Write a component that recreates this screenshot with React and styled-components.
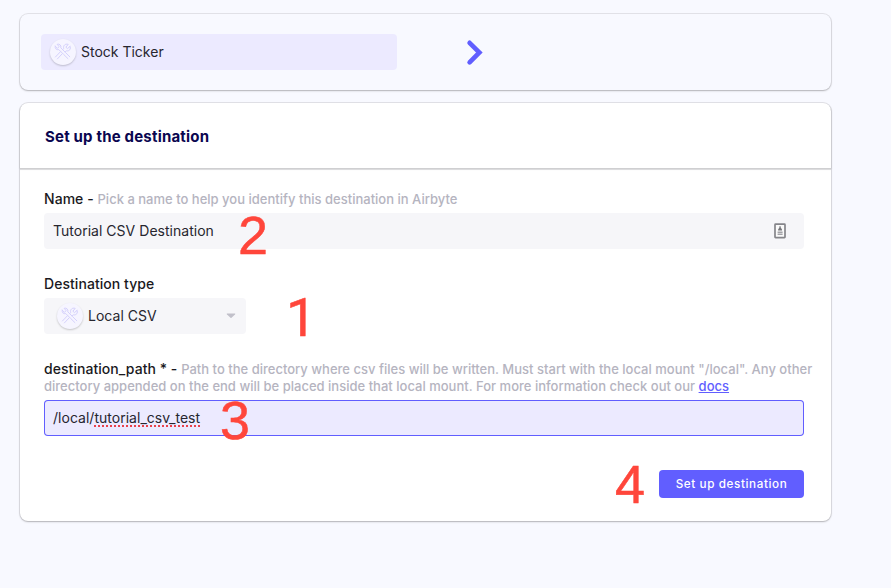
import React from "react";
import styled, { createGlobalStyle } from "styled-components";

const GlobalStyle = createGlobalStyle`
  * { box-sizing: border-box; }
  body {
    margin: 0;
    background: #f8f9ff;
    font-family: Inter, "Liberation Sans", sans-serif;
    color: #1a194d;
    overflow: hidden;
  }
`;

const Page = styled.main`
  width: 891px;
  height: 588px;
  padding: 14px 60px 0 20px;
`;

const Card = styled.section`
  border-radius: 8px;
  box-shadow: 0 1px 2px rgba(0, 0, 0, 0.22), 0 0 0 1px #e4e4ea;
`;

const ConnectionCard = styled(Card)`
  height: 76px;
  padding: 20px 21px;
  display: flex;
  align-items: center;
  gap: 69px;
`;

const SourceItem = styled.div`
  width: 356px;
  height: 36px;
  padding-left: 9px;
  border-radius: 4px;
  background: #eceaff;
  display: flex;
  align-items: center;
  gap: 5px;
`;

const IconDisc = styled.span`
  width: 26px;
  height: 26px;
  border-radius: 50%;
  background: #f6f5ff;
  box-shadow: 0 1px 2px rgba(0, 0, 0, 0.2);
  display: flex;
  align-items: center;
  justify-content: center;
`;

const ValueText = styled.span`
  font-size: 14px;
  line-height: 20px;
  letter-spacing: ${(p) => p.$spacing || "0.02px"};
  color: #27262f;
`;

const FormCard = styled(Card)`
  margin-top: 13px;
  height: 418px;
  background: #fff;
`;

const FormHeader = styled.h1`
  margin: 0;
  height: 65px;
  padding: 2px 25px 0;
  border-radius: 8px 8px 0 0;
  box-shadow: 0 1px 0 #cfcfd1, 0 2px 0 #dcdcde, 0 1px 2px rgba(0, 0, 0, 0.2);
  display: flex;
  align-items: center;
  font-size: 15px;
  font-weight: 700;
  letter-spacing: 0.19px;
  color: #0a0650;
`;

const Form = styled.form`
  padding: 22px 28px 0 24px;
  display: flex;
  flex-direction: column;
`;

const Field = styled.div`
  position: relative;
  margin-bottom: ${(p) => p.$gap || "26px"};
`;

const Label = styled.label`
  display: block;
  margin: 0 -20px 6px 0;
  font-size: 14px;
  font-weight: 500;
  line-height: 17px;
  letter-spacing: 0.05px;
  color: #1a1921;
`;

const Hint = styled.span`
  font-size: 13px;
  line-height: 15px;
  letter-spacing: 0.01px;
  color: #b5b4bf;
`;

const DocsLink = styled.a`
  color: #615eff;
  text-decoration: underline;
`;

const Control = styled.div`
  width: ${(p) => p.$width || "760px"};
  height: 36px;
  padding: 0 ${(p) => p.$right || "17px"} 0 ${(p) => p.$left || "9px"};
  border-radius: 4px;
  background: ${(p) => (p.$focused ? "#eceaff" : "#f6f6f9")};
  box-shadow: ${(p) => (p.$focused ? "inset 0 0 0 1px #615eff" : "none")};
  display: flex;
  align-items: center;
  gap: 5px;
`;

const Trailing = styled.span`
  margin-left: auto;
  display: flex;
`;

const Misspelled = styled.span`
  text-decoration: underline dotted #e9414b 2px;
  text-decoration-skip-ink: none;
  text-underline-offset: 2px;
`;

const Actions = styled.div`
  position: relative;
  display: flex;
  justify-content: flex-end;
  width: 760px;
`;

const SubmitButton = styled.button`
  width: 145px;
  height: 28px;
  padding: 0;
  border: 0;
  border-radius: 4px;
  background: #615eff;
  color: #fff;
  font-family: inherit;
  font-size: 11.7px;
  font-weight: 500;
  letter-spacing: 0.6px;
`;

const StepMark = styled.span`
  position: absolute;
  left: ${(p) => p.$x}px;
  top: ${(p) => p.$y}px;
  font-family: ${(p) => p.$font || '"Liberation Sans"'}, Arial, sans-serif;
  font-size: 54px;
  line-height: 54px;
  color: #ff463b;
  -webkit-text-stroke: 0.5px #ff463b;
  pointer-events: none;
`;

const ToolsIcon = () => (
  <svg width="18" height="18" viewBox="0 0 18 18" fill="none" stroke="#d5d1fc" strokeWidth="1" strokeLinecap="round" strokeLinejoin="round">
    <path d="M1.2 3.1 3.4 5.3 5.2 3.6 3.1 1.3C5.4.5 7.5 2.4 6.8 4.8L11.4 9.4 15.8 13.8M1.2 3.1C.6 5.5 2.6 7.2 4.8 6.6L9.6 11.4 13.9 15.6" />
    <path d="M16 3.4 13.5 5.6 11.9 4.2 14.2 1.4C11.3.4 8.8 2.7 9.7 5.4L8.5 6.8M16 3.4C17.5 5.8 15.1 8.6 12.3 7.8L11.2 8.9M6.2 9 1.4 14M8 11 3.4 15.9" />
  </svg>
);

const ChevronIcon = () => (
  <svg width="18" height="30" viewBox="0 0 18 30" fill="none" stroke="#615eff" strokeWidth="4.6" strokeLinecap="round" strokeLinejoin="miter">
    <path d="M3.6 5.8 13.4 15.5 3.6 25.3" />
  </svg>
);

const CaretIcon = () => (
  <svg width="10" height="6" viewBox="0 0 10 6">
    <path d="M1 .5h8q.6.4 0 1L5.5 4.8q-.5.4-1 0L1 1.5q-.6-.6 0-1Z" fill="#c1c0ca" />
  </svg>
);

const ContactIcon = () => (
  <svg width="13" height="16" viewBox="0 0 13 16">
    <rect x="1" y="1.2" width="10" height="13.4" rx=".6" fill="#fafafa" stroke="#85858a" strokeWidth="1.7" />
    <path d="M5.4 3.2h1.3v1.4l1.3 1.8v1H4.1v-1l1.3-1.8Z" fill="#77777b" />
    <path d="M3.6 8.6h5v1.3h-5zm0 2h5v1.5h-5z" fill="#a2a2a7" />
  </svg>
);

export default function App() {
  return (
    <>
      <GlobalStyle />
      <Page>
        <ConnectionCard>
          <SourceItem>
            <IconDisc><ToolsIcon /></IconDisc>
            <ValueText $spacing="0">Stock Ticker</ValueText>
          </SourceItem>
          <ChevronIcon />
        </ConnectionCard>
        <FormCard>
          <FormHeader>Set up the destination</FormHeader>
          <Form>
            <Field>
              <Label>Name - <Hint>Pick a name to help you identify this destination in Airbyte</Hint></Label>
              <Control>
                <ValueText>Tutorial CSV Destination</ValueText>
                <Trailing><ContactIcon /></Trailing>
              </Control>
              <StepMark $x={194} $y={18}>2</StepMark>
            </Field>
            <Field>
              <Label>Destination type</Label>
              <Control $width="202px" $left="13px" $right="10px">
                <IconDisc><ToolsIcon /></IconDisc>
                <ValueText>Local CSV</ValueText>
                <Trailing><CaretIcon /></Trailing>
              </Control>
              <StepMark $x={242} $y={16} $font="Roboto">1</StepMark>
            </Field>
            <Field $gap="34px">
              <Label>
                destination_path * - <Hint>Path to the directory where csv files will be written. Must start with the local mount "/local". Any other directory appended on the end will be placed inside that local mount. For more information check out our <DocsLink>docs</DocsLink></Hint>
              </Label>
              <Control $focused>
                <ValueText>/local/<Misspelled>tutorial_csv_test</Misspelled></ValueText>
              </Control>
              <StepMark $x={176} $y={33}>3</StepMark>
            </Field>
            <Actions>
              <SubmitButton type="button">Set up destination</SubmitButton>
              <StepMark $x={571} $y={-13}>4</StepMark>
            </Actions>
          </Form>
        </FormCard>
      </Page>
    </>
  );
}
